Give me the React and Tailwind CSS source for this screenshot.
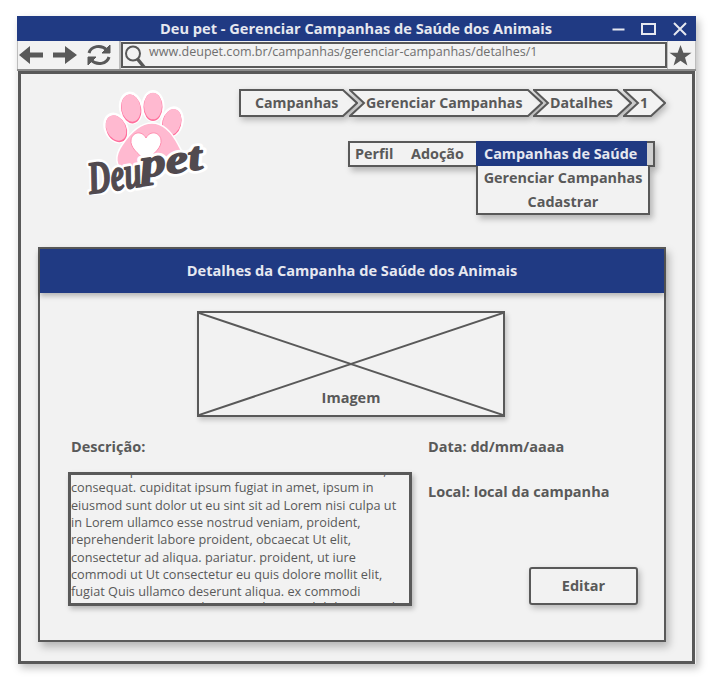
const FONT = "font-['Open_Sans','Noto_Sans',sans-serif]";

const LOREM = [
  "Sint anim pariatur enim occaecat in eu sint mollit nisi,",
  "consequat. cupiditat ipsum fugiat in amet, ipsum in",
  "eiusmod sunt dolor ut eu sint sit ad Lorem nisi culpa ut",
  "in Lorem ullamco esse nostrud veniam, proident,",
  "reprehenderit labore proident, obcaecat Ut elit,",
  "consectetur ad aliqua. pariatur. proident, ut iure",
  "commodi ut Ut consectetur eu quis dolore mollit elit,",
  "fugiat Quis ullamco deserunt aliqua. ex commodi",
];

const CRUMBS = [
  { label: "Campanhas", width: 119, first: true, cls: "ml-0", text: "pl-[16px]" },
  { label: "Gerenciar Campanhas", width: 194, cls: "-ml-[9px]", text: "pl-[17px]" },
  { label: "Datalhes", width: 99, cls: "-ml-[10px]", text: "pl-[17px]" },
  { label: "1", width: 43, cls: "-ml-[9px]", text: "pl-[17px]" },
];

function Crumb({ label, width, first, cls, text }) {
  const h = 28;
  const tip = 15;
  const r = width - tip;
  const pts = first
    ? `1,1 ${r},1 ${width - 1},${h / 2} ${r},${h - 1} 1,${h - 1}`
    : `1,1 ${r},1 ${width - 1},${h / 2} ${r},${h - 1} 1,${h - 1} ${tip},${h / 2}`;
  return (
    <div className={`relative h-[28px] shrink-0 ${cls}`} style={{ width }}>
      <svg width={width} height={h} className="absolute inset-0 drop-shadow-[2px_3px_3px_rgba(0,0,0,0.25)]">
        <polygon points={pts} fill="#f2f2f2" stroke="#595959" strokeWidth="2" />
      </svg>
      <div className={`relative flex h-full items-center text-[14.200px] font-bold text-[#595959] ${text}`}>{label}</div>
    </div>
  );
}

function Logo() {
  const toes = [
    [131, 108, 10, 14.500, -10],
    [153, 106, 9.500, 14, 0],
    [172, 122, 9.500, 14, 15],
    [116, 128, 10, 14, -25],
  ];
  const palm = "M152 123 C165 123 173 134 179 146 C186 157 184 168 172 170 L126 170 C114 168 115 155 122 145 C130 133 140 123 152 123Z";
  return (
    <svg width="130" height="110" viewBox="80 85 130 110" className="shrink-0">
      {toes.map(([x, y, rx, ry, a]) => (
        <ellipse key={x} cx={x} cy={y} rx={rx + 2} ry={ry + 2} fill="#fff" transform={`rotate(${a} ${x} ${y})`} />
      ))}
      {toes.map(([x, y, rx, ry, a]) => (
        <g key={x} transform={`rotate(${a} ${x} ${y})`}>
          <ellipse cx={x} cy={y + 1} rx={rx} ry={ry} fill="#ff6f9c" />
          <ellipse cx={x} cy={y} rx={rx - 0.5} ry={ry - 0.7} fill="#ffb9d0" />
        </g>
      ))}
      <path d={palm} fill="#ffb9d0" stroke="#fff" strokeWidth="1.500" />
      <path d="M146 161 C137 153 130 147 131 140 C132 132 142 130 146 138 C150 130 160 132 161 140 C162 147 155 153 146 161Z" fill="#fff" stroke="#ff8fb0" strokeWidth="1" />
      <g transform="rotate(-8 145 170)" fontFamily="'Liberation Serif', serif" fontStyle="italic" fontWeight="700" strokeLinejoin="round">
        <g fill="#fff" stroke="#fff" strokeWidth="7">
          <text x="87" y="186" fontSize="46" textLength="54" lengthAdjust="spacingAndGlyphs">Deu</text>
          <text x="141" y="177" fontSize="40" textLength="62" lengthAdjust="spacingAndGlyphs">pet</text>
        </g>
        <g fill="#514a4f" stroke="#514a4f" strokeWidth="1.500">
          <text x="87" y="186" fontSize="46" textLength="54" lengthAdjust="spacingAndGlyphs">Deu</text>
          <text x="141" y="177" fontSize="40" textLength="62" lengthAdjust="spacingAndGlyphs">pet</text>
        </g>
      </g>
    </svg>
  );
}

function TitleBar() {
  return (
    <div className="flex h-[25px] items-center bg-[#203a83] text-[#e6e8f0]">
      <div className="w-[586px] pl-[143px] text-[14.600px] font-bold whitespace-nowrap">Deu pet - Gerenciar Campanhas de Saúde dos Animais</div>
      <svg width="92" height="20" viewBox="0 0 92 20" className="shrink-0" fill="none" stroke="#e6e8f0" strokeWidth="2">
        <path d="M9.500 10.500H21.500" />
        <rect x="39" y="5" width="13" height="10" />
        <path d="M71 4L83 16M83 4L71 16" />
      </svg>
    </div>
  );
}

function Toolbar() {
  return (
    <div className="flex h-[30px] items-stretch border-b-2 border-[#8c8c8c] bg-[#f2f2f2]">
      <div className="flex w-[104px] shrink-0 items-center gap-[8px] border-l border-r-2 border-[#bdbdbd]">
        <svg width="26" height="20" viewBox="0 0 26 20" fill="#595959">
          <path d="M1 10L12 1V7.500H25V12.500H12V19Z" />
        </svg>
        <svg width="26" height="20" viewBox="0 0 26 20" fill="#595959">
          <path d="M25 10L13 1V7.500H1V12.500H13V19Z" />
        </svg>
        <svg width="26" height="24" viewBox="0 0 26 24" fill="none" stroke="#595959" strokeWidth="3">
          <path d="M3 10C5 3 15 1 21 7" />
          <path d="M23 14C21 21 11 23 5 17" />
          <path d="M24 2V10H16Z" fill="#595959" strokeWidth="1" />
          <path d="M2 22V14H10Z" fill="#595959" strokeWidth="1" />
        </svg>
      </div>
      <div className="mt-[1px] flex h-[26px] flex-1 items-start border-2 border-[#595959] pl-[1px]">
        <svg width="22" height="26" viewBox="0 0 22 26" fill="none" stroke="#595959" className="shrink-0">
          <circle cx="9" cy="9.500" r="7" strokeWidth="2" />
          <path d="M13.500 15L20 23" strokeWidth="3.500" />
        </svg>
        <span className="ml-[3px] text-[12.550px] leading-[15px] whitespace-nowrap text-[#6f6f6f]">www.deupet.com.br/campanhas/gerenciar-campanhas/detalhes/1</span>
      </div>
      <div className="flex w-[29px] shrink-0 items-center border-x border-[#bdbdbd] pl-[1px]">
        <svg width="23" height="23" viewBox="0 0 24 24" fill="#595959">
          <path d="M12 1L15 9H23.500L16.700 14.200L19.200 22.500L12 17.500L4.800 22.500L7.300 14.200L0.500 9H9Z" />
        </svg>
      </div>
    </div>
  );
}

function Menu() {
  return (
    <div className="relative mt-[24px] ml-[109px] flex h-[26px] w-[307px] items-center border-2 border-[#595959] bg-[#f2f2f2] pl-[5px] text-[14.400px] font-bold text-[#595959] shadow-[3px_4px_6px_rgba(0,0,0,0.25)]">
      <span className="w-[56px]">Perfil</span>
      <span className="w-[65px]">Adoção</span>
      <div className="absolute top-[-2px] left-[126px] flex h-[25px] w-[171px] items-center bg-[#203a83] pl-[8px] whitespace-nowrap text-[#e6e8f0]">Campanhas de Saúde</div>
      <div className="absolute top-0 left-[297px] h-[22px] w-[6px] bg-[#d0d0d0]" />
      <div className="absolute top-[23px] left-[126px] flex h-[49px] w-[174px] flex-col items-center justify-center border-2 border-t-0 border-[#595959] bg-[#f2f2f2] leading-[24px] whitespace-nowrap shadow-[3px_4px_6px_rgba(0,0,0,0.25)]">
        <span>Gerenciar Campanhas</span>
        <span>Cadastrar</span>
      </div>
    </div>
  );
}

function ImagePlaceholder() {
  return (
    <div className="relative ml-[157px] h-[106px] w-[308px] border-2 border-[#595959] shadow-[2px_3px_5px_rgba(0,0,0,0.2)]">
      <svg width="304" height="102" className="absolute inset-0">
        <path d="M0 0L304 102M304 0L0 102" stroke="#595959" strokeWidth="2" fill="none" />
      </svg>
      <div className="absolute inset-x-0 bottom-[6px] text-center text-[14.500px] font-bold text-[#595959]">Imagem</div>
    </div>
  );
}

function Panel() {
  return (
    <div className="mt-[1px] ml-[17px] h-[395px] w-[628px] border-2 border-[#595959] bg-[#f2f2f2] shadow-[3px_5px_8px_rgba(0,0,0,0.25)]">
      <div className="flex h-[44px] items-center justify-center bg-[#203a83] text-[14.600px] font-bold text-[#e6e8f0] shadow-[0_3px_5px_rgba(0,0,0,0.25)]">
        Detalhes da Campanha de Saúde dos Animais
      </div>
      <div className="pt-[18px]">
        <ImagePlaceholder />
        <div className="mt-[20px] flex">
          <div className="ml-[28px] w-[360px] shrink-0">
            <div className="ml-[3px] text-[14.500px] leading-[20px] font-bold text-[#595959]">Descrição:</div>
            <div className="mt-[15px] h-[134px] w-[344px] overflow-hidden border-[3px] border-[#595959] shadow-[2px_3px_5px_rgba(0,0,0,0.25)]">
              <div className="-mt-[13px] text-[12.700px] leading-[17.330px] whitespace-nowrap text-[#595959]">
                {LOREM.map((line) => (
                  <div key={line}>{line}</div>
                ))}
                <div className="-mt-[2px]">exercitation aute ut adipisicing aliqua sed dolore nisi id</div>
              </div>
            </div>
          </div>
          <div className="flex flex-1 flex-col text-[14.500px] leading-[20px] font-bold text-[#595959]">
            <div>Data: dd/mm/aaaa</div>
            <div className="mt-[25px]">Local: local da campanha</div>
            <button type="button" className="mt-[65px] ml-[101px] h-[38px] w-[109px] rounded-[3px] border-2 border-[#595959] font-bold shadow-[2px_3px_6px_rgba(0,0,0,0.25)]">Editar</button>
          </div>
        </div>
      </div>
    </div>
  );
}

export default function App() {
  return (
    <div className={`h-[684px] w-[715px] bg-white pt-[16px] pl-[17px] ${FONT}`}>
      <div className="h-[648px] w-[679px] bg-[#f2f2f2] shadow-[3px_4px_8px_rgba(0,0,0,0.25)]">
        <TitleBar />
        <Toolbar />
        <div className="ml-[1px] h-[593px] w-[677px] border-[3px] border-[#595959] bg-[#f2f2f2]">
          <div className="flex h-[172px]">
            <div className="mt-[11px] ml-[59px]">
              <Logo />
            </div>
            <div className="ml-[29px] pt-[15px]">
              <div className="flex">
                {CRUMBS.map((c) => (
                  <Crumb key={c.label} {...c} />
                ))}
              </div>
              <Menu />
            </div>
          </div>
          <Panel />
        </div>
      </div>
    </div>
  );
}
